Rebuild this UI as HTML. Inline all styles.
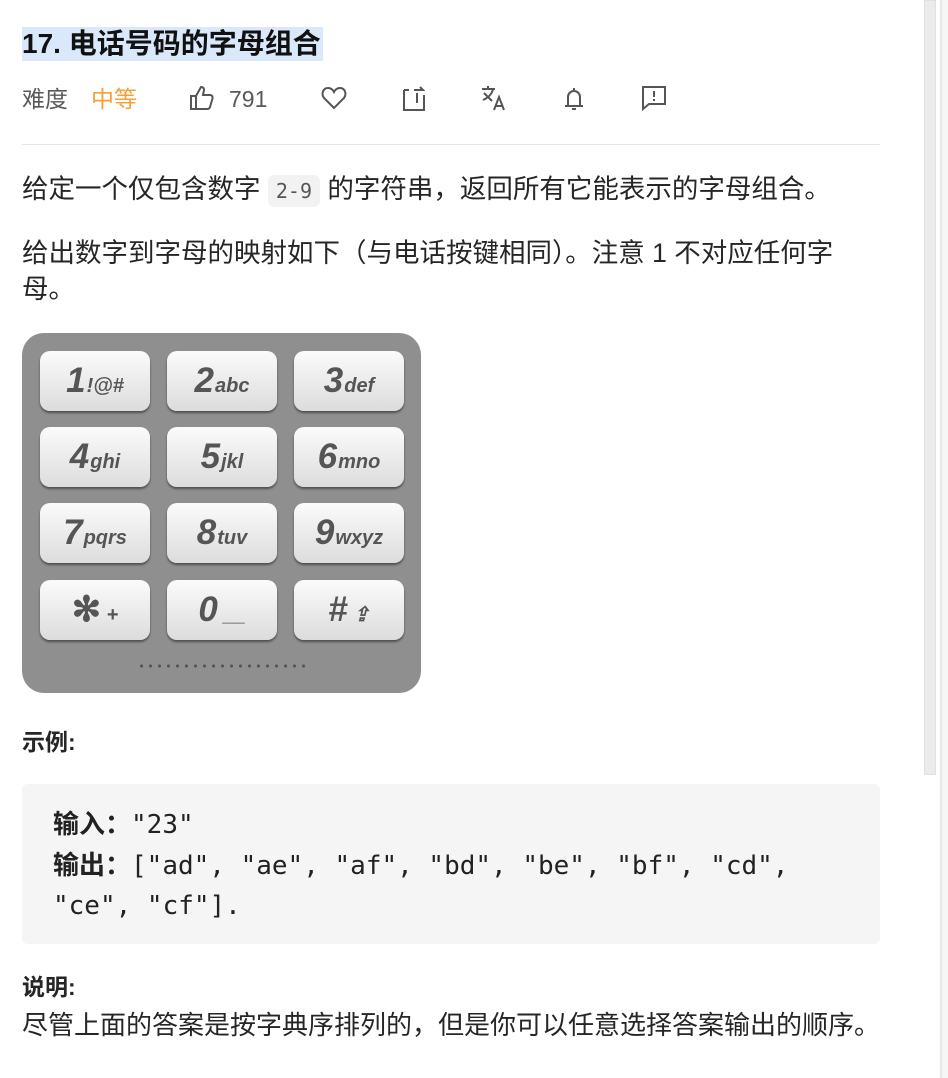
<!DOCTYPE html>
<html><head><meta charset="utf-8"><style>
*{margin:0;padding:0;box-sizing:border-box}
body{width:948px;height:1078px;background:#fff;position:relative;overflow:hidden;font-family:"Liberation Sans","Noto Sans CJK SC",sans-serif;color:#262626}
.a{position:absolute;white-space:nowrap}
.t{left:22px;top:27px;font-size:28px;font-weight:bold;background:#d9e8fb;color:#111;line-height:34px;padding:0 2px 0 0}
.row{top:84px;font-size:23px;color:#595959;line-height:30px}
.ic{position:absolute;top:84px}
.p{left:22px;font-size:26.5px;line-height:34px;color:#262626}
code{font-family:"DejaVu Sans Mono",monospace;font-size:20px;background:#f2f2f2;border-radius:6px;padding:4px 8px;color:#555}
.pad{position:absolute;left:22px;top:333px;width:399px;height:360px;background:#8f8f8f;border-radius:22px}
.k{position:absolute;width:110px;height:60px;border-radius:10px;background:linear-gradient(#fbfbfb,#dcdcdc);box-shadow:0 2px 2px rgba(0,0,0,.45);font-family:"Liberation Sans",sans-serif;font-style:italic;font-weight:bold;color:#555;text-align:center;line-height:60px}
.k b{font-size:35px;letter-spacing:1px}.k i{font-size:20px}
.code{position:absolute;left:22px;top:784px;width:858px;height:160px;background:#f5f5f5;border-radius:6px;padding:20px 31px;font-family:"DejaVu Sans Mono","Noto Sans CJK SC",monospace;font-size:26px;line-height:40px;color:#222}
.code b{font-family:"Liberation Sans","Noto Sans CJK SC",sans-serif}
</style></head><body>
<div class="a t">17. 电话号码的字母组合</div>
<div class="a row" style="left:22px">难度</div>
<div class="a row" style="left:91px;color:#f5a038">中等</div>
<svg class="ic" style="left:188px;top:84px" width="28" height="28" viewBox="0 0 28 28" fill="none" stroke="#555" stroke-width="2"><path d="M3 12h5v13H3zM8 12l5-9c2 0 3 1 3 3l-1 5h7c2 0 3 2 2.5 3.5L22 23c-.5 1.5-1.5 2-3 2H8"/></svg>
<div class="a row" style="left:229px">791</div>
<svg class="ic" style="left:321px;top:86px" width="26" height="24" viewBox="0 0 26 24" fill="none" stroke="#555" stroke-width="2"><path d="M13 22L3 12C0 8 2 2 7 2c3 0 5 2 6 4 1-2 3-4 6-4 5 0 7 6 4 10z"/></svg>
<svg class="ic" style="left:400px;top:85px" width="28" height="28" viewBox="0 0 28 28" fill="none" stroke="#555" stroke-width="2"><path d="M4 5v20h20V10M4 5h5M14 5h9l-3-3M17 8v10"/></svg>
<svg class="ic" style="left:480px;top:84px" width="28" height="28" viewBox="0 0 28 28" fill="none" stroke="#555" stroke-width="2"><path d="M2 5h13M8 2v3M4 9l8 8M13 5c-1 5-5 9-10 11M14 26l5-13 5 13M16 22h6"/></svg>
<svg class="ic" style="left:562px;top:85px" width="24" height="28" viewBox="0 0 24 28" fill="none" stroke="#555" stroke-width="2"><path d="M12 3v2M6 21V12a6 6 0 0 1 12 0v9M3 21h18M10 24h4"/></svg>
<svg class="ic" style="left:640px;top:84px" width="28" height="28" viewBox="0 0 28 28" fill="none" stroke="#555" stroke-width="2"><path d="M3 3h22v17H9l-6 5zM14 7v6M14 15v2"/></svg>
<div class="a" style="left:22px;top:144px;width:858px;height:1px;background:#e5e5e5"></div>
<div class="a p" style="top:172px">给定一个仅包含数字 <code>2-9</code> 的字符串，返回所有它能表示的字母组合。</div>
<div class="a p" style="top:236px">给出数字到字母的映射如下（与电话按键相同）。注意 1 不对应任何字</div>
<div class="a p" style="top:272px">母。</div>
<div class="pad">
<div class="k" style="left:18px;top:18px"><b>1</b><i>!@#</i></div>
<div class="k" style="left:145px;top:18px"><b>2</b><i>abc</i></div>
<div class="k" style="left:272px;top:18px"><b>3</b><i>def</i></div>
<div class="k" style="left:18px;top:94px"><b>4</b><i>ghi</i></div>
<div class="k" style="left:145px;top:94px"><b>5</b><i>jkl</i></div>
<div class="k" style="left:272px;top:94px"><b>6</b><i>mno</i></div>
<div class="k" style="left:18px;top:170px"><b>7</b><i>pqrs</i></div>
<div class="k" style="left:145px;top:170px"><b>8</b><i>tuv</i></div>
<div class="k" style="left:272px;top:170px"><b>9</b><i>wxyz</i></div>
<div class="k" style="left:18px;top:247px"><b style="font-style:normal">✻</b> <i>+</i></div>
<div class="k" style="left:145px;top:247px"><b>0</b> <i>__</i></div>
<div class="k" style="left:272px;top:247px"><b>#</b> <i>⇪</i></div>
<div style="position:absolute;left:115px;top:328px;width:170px;height:10px;background:radial-gradient(circle,#555 1.4px,transparent 1.8px) 0 0/9px 10px"></div>
</div>
<div class="a" style="left:22px;top:727px;font-size:23px;font-weight:bold;line-height:30px">示例:</div>
<div class="code"><b>输入：</b>"23"<br><b>输出：</b>["ad", "ae", "af", "bd", "be", "bf", "cd",<br>"ce", "cf"].</div>
<div class="a" style="left:22px;top:972px;font-size:23px;font-weight:bold;line-height:30px">说明:</div>
<div class="a p" style="top:1008px;font-size:26px">尽管上面的答案是按字典序排列的，但是你可以任意选择答案输出的顺序。</div>
<div class="a" style="left:924px;top:0;width:12px;height:775px;background:#ebebeb;border:1px solid #e0e0e0"></div>
<div class="a" style="left:940px;top:0;width:8px;height:1078px;background:#f6f6f6;border-left:2px solid #e8e8e8"></div>
</body></html>
